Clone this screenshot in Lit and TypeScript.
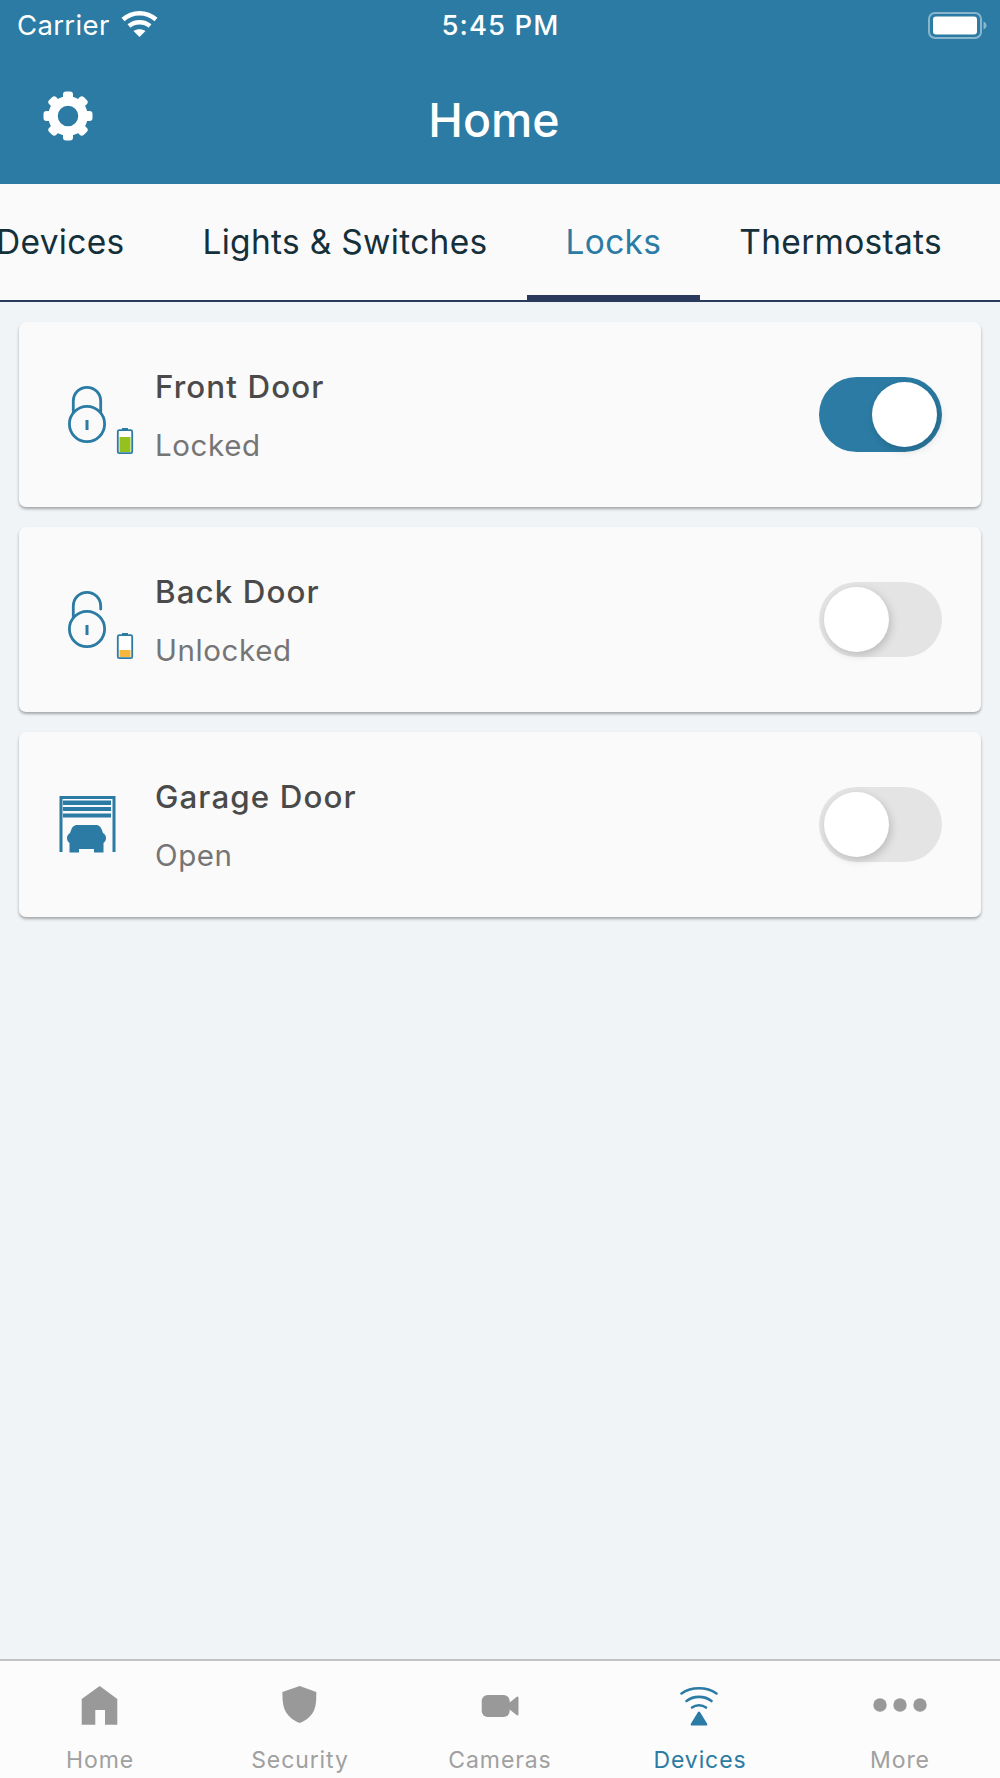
import { LitElement, html, css, svg } from "lit";
import { customElement } from "lit/decorators.js";

const lockIcon = (open: boolean, level: number, color: string) => svg`
  <svg class="device-icon" viewBox="0 0 80 80" fill="none">
    <circle cx="32" cy="49" r="17.6" stroke="#2b7ba4" stroke-width="2.8" />
    <path d="${open ? "M18.3 37V26a13.7 13.7 0 0 1 27.4 0v3" : "M18.3 37V26a13.7 13.7 0 0 1 27.4 0v11"}" stroke="#2b7ba4" stroke-width="2.8" stroke-linecap="round" />
    <rect x="30.5" y="45" width="3" height="10" fill="#2b7ba4" />
    <rect x="67" y="53" width="6" height="3" fill="#2b7ba4" />
    <rect x="62.8" y="55.2" width="14.4" height="23" rx="1.5" fill="#fff" stroke="#2b7ba4" stroke-width="1.8" />
    <rect x="64.5" y="${77 - level}" width="11" height="${level}" fill="${color}" />
  </svg>
`;

const garageIcon = svg`
  <svg class="device-icon" viewBox="0 0 80 80" fill="#2b7ba4">
    <path d="M4.5 11h56v56h-3V14h-50v53h-3z" />
    <rect x="8" y="15.500" width="48" height="4.500" />
    <rect x="8" y="22" width="48" height="4" />
    <rect x="8" y="28.500" width="48" height="4" />
    <path d="M23 40h18c3 0 4.500 2 5.500 4l1.500 4c2 1 3 3 3 5s-1 4-2.500 5v9.500h-9.500V64H24v3.500h-9.500V58C13 57 12 55 12 53s1-4 3-5l1.500-4c1-2 2.500-4 6.500-4z" />
  </svg>
`;

const navIcons: Record<string, unknown> = {
  home: svg`<path d="M24.7 2 42.3 15v25.700H30V26h-9.700v14.700H6.700V15z" />`,
  shield: svg`<path d="M24.700 2 41.300 8c0 13 0 24-16.600 31C8 32 7.400 21 7.400 8z" />`,
  camera: svg`<rect x="6.700" y="11" width="28" height="22" rx="6" /><path d="M34 19l7.500-6q2-1.300 2 1v16q0 2.300-2 1l-7.500-6z" />`,
  wifi: svg`
    <g fill="none" stroke="currentColor" stroke-width="2.600" stroke-linecap="round">
      <path d="M6.500 9.500c10-7 25-7 35 0" />
      <path d="M11.500 17c7-5.500 18-5.500 25 0" />
      <path d="M17 23.500c4-3 10-3 14 0" />
    </g>
    <path d="M22.700 28.500q1.300-2 2.600 0l6.700 11q1 2-1 2H17q-2 0-1-2z" />`,
  more: svg`<circle cx="5" cy="21" r="6.700" /><circle cx="25" cy="21" r="6.700" /><circle cx="45" cy="21" r="6.700" />`,
};

@customElement("app-root")
export class AppRoot extends LitElement {
  static styles = css`
    :host {
      display: flex;
      flex-direction: column;
      height: 1778px;
      overflow: hidden;
      background: #f0f4f7;
      font-family: Inter, "Noto Sans", sans-serif;
    }

    .top {
      background: #2b7ba4;
      color: #fff;
      height: 183.500px;
      flex: none;
    }
    .status {
      display: grid;
      grid-template-columns: 1fr auto 1fr;
      align-items: center;
      height: 50px;
      padding: 0 13px 0 17px;
      font-size: 27.500px;
    }
    .carrier {
      display: flex;
      align-items: center;
      gap: 11px;
      letter-spacing: 0.35px;
    }
    .time {
      font-weight: 500;
      letter-spacing: 1.1px;
      margin-left: -3px;
    }
    .wifi {
      width: 37px;
      height: 28px;
      margin-top: -3px;
    }
    .battery {
      justify-self: end;
      width: 59px;
      height: 27px;
    }
    .bar {
      display: grid;
      grid-template-columns: 1fr auto 1fr;
      align-items: center;
      padding-top: 42px;
    }
    .gear {
      width: 52px;
      height: 52px;
      margin: -8px 0 0 42px;
    }
    .title {
      font-size: 46.500px;
      font-weight: 500;
      line-height: 56px;
      margin-right: 12px;
    }

    .tabs {
      display: flex;
      flex: none;
      height: 118px;
      background: #fafafa;
      border-bottom: 2px solid #2a3a5c;
      box-sizing: border-box;
      overflow: hidden;
    }
    .tab {
      flex: none;
      position: relative;
      padding: 0 39px;
      font-size: 33.500px;
      letter-spacing: 0.3px;
      line-height: 116px;
      color: #14303a;
    }
    .tab:first-child {
      margin-left: -43px;
    }
    .tab.active {
      color: #2b7ba4;
    }
    .tab.active::after {
      content: "";
      position: absolute;
      left: 0;
      right: 0;
      bottom: -2px;
      height: 7px;
      background: #2a3a5c;
    }

    .list {
      flex: 1;
      display: flex;
      flex-direction: column;
      gap: 20px;
      padding: 20px 19px 0;
    }
    .card {
      display: flex;
      align-items: center;
      height: 185.200px;
      padding: 0 39px 0 36px;
      background: #fafafa;
      border-radius: 7px;
      box-shadow: 0 2px 3px rgba(0, 0, 0, 0.32);
    }
    .device-icon {
      width: 80px;
      height: 80px;
      flex: none;
      margin-top: 2px;
    }
    .info {
      flex: 1;
      margin: 3px 0 0 20px;
    }
    .name {
      font-size: 31.300px;
      font-weight: 500;
      letter-spacing: 1.1px;
      line-height: 36px;
      color: #4a4a4a;
    }
    .state {
      margin-top: 22px;
      font-size: 29.500px;
      letter-spacing: 0.6px;
      line-height: 36px;
      color: #757575;
    }

    .switch {
      flex: none;
      display: flex;
      width: 123px;
      height: 75px;
      padding: 5px;
      box-sizing: border-box;
      border-radius: 38px;
      background: #e4e4e4;
    }
    .switch.on {
      justify-content: flex-end;
      background: #2b7ba4;
    }
    .knob {
      width: 65px;
      height: 65px;
      border-radius: 50%;
      background: #fff;
      box-shadow: 2px 3px 9px rgba(0, 0, 0, 0.18);
    }

    .nav {
      flex: none;
      display: grid;
      grid-template-columns: repeat(5, 1fr);
      height: 119px;
      padding-top: 23px;
      box-sizing: border-box;
      background: #fcfcfc;
      border-top: 2px solid #c2c2c2;
    }
    .nav-item {
      display: flex;
      flex-direction: column;
      align-items: center;
      color: #a0a0a0;
    }
    .nav-item.active {
      color: #2b7ba4;
    }
    .nav-icon {
      width: 50px;
      height: 44px;
      fill: #999;
      overflow: visible;
    }
    .nav-item.active .nav-icon {
      fill: #2b7ba4;
    }
    .nav-label {
      margin-top: 17px;
      font-size: 23px;
      line-height: 30px;
      letter-spacing: 0.9px;
    }
  `;

  tabs = ["Devices", "Lights & Switches", "Locks", "Thermostats"];

  devices = [
    { name: "Front Door", state: "Locked", on: true, icon: lockIcon(false, 15, "#95c11f") },
    { name: "Back Door", state: "Unlocked", on: false, icon: lockIcon(true, 7, "#f5b83d") },
    { name: "Garage Door", state: "Open", on: false, icon: garageIcon },
  ];

  nav = [
    { label: "Home", icon: "home" },
    { label: "Security", icon: "shield" },
    { label: "Cameras", icon: "camera" },
    { label: "Devices", icon: "wifi", active: true },
    { label: "More", icon: "more" },
  ];

  gear() {
    const teeth = [0, 45, 90, 135, 180, 225, 270, 315];
    return html`<svg class="gear" viewBox="-26 -26 52 52" fill="#fff">
      <circle r="15" fill="none" stroke="#fff" stroke-width="9.500" />
      ${teeth.map(
        (a) => svg`<rect x="-5" y="-24.500" width="10" height="10" rx="3" transform="rotate(${a})" />`
      )}
    </svg>`;
  }

  render() {
    return html`
      <div class="top">
        <div class="status">
          <div class="carrier">
            Carrier
            <svg class="wifi" viewBox="0 0 37 28" fill="none" stroke="#fff" stroke-width="4.500">
              <path d="M2 9.500c9.500-8.500 23.500-8.500 33 0" />
              <path d="M8 16c6-5 15-5 21 0" />
              <path d="M18.500 27 12.500 21c3.500-2.500 8.500-2.500 12 0z" fill="#fff" stroke="none" />
            </svg>
          </div>
          <div class="time">5:45 PM</div>
          <svg class="battery" viewBox="0 0 59 27">
            <rect x="1" y="1" width="52" height="25" rx="6" fill="none" stroke="#fff" stroke-opacity="0.45" stroke-width="2" />
            <rect x="5" y="4.500" width="44" height="18" rx="3" fill="#fff" />
            <path d="M55.500 9.500c2 .8 3 2.200 3 4s-1 3.200-3 4z" fill="#fff" fill-opacity="0.45" />
          </svg>
        </div>
        <div class="bar">
          ${this.gear()}
          <div class="title">Home</div>
        </div>
      </div>

      <div class="tabs">
        ${this.tabs.map(
          (t) => html`<div class="tab ${t === "Locks" ? "active" : ""}">${t}</div>`
        )}
      </div>

      <div class="list">
        ${this.devices.map(
          (d) => html`
            <div class="card">
              ${d.icon}
              <div class="info">
                <div class="name">${d.name}</div>
                <div class="state">${d.state}</div>
              </div>
              <div class="switch ${d.on ? "on" : ""}"><div class="knob"></div></div>
            </div>
          `
        )}
      </div>

      <div class="nav">
        ${this.nav.map(
          (n) => html`
            <div class="nav-item ${n.active ? "active" : ""}">
              <svg class="nav-icon" viewBox="0 0 50 44">${navIcons[n.icon]}</svg>
              <div class="nav-label">${n.label}</div>
            </div>
          `
        )}
      </div>
    `;
  }
}
